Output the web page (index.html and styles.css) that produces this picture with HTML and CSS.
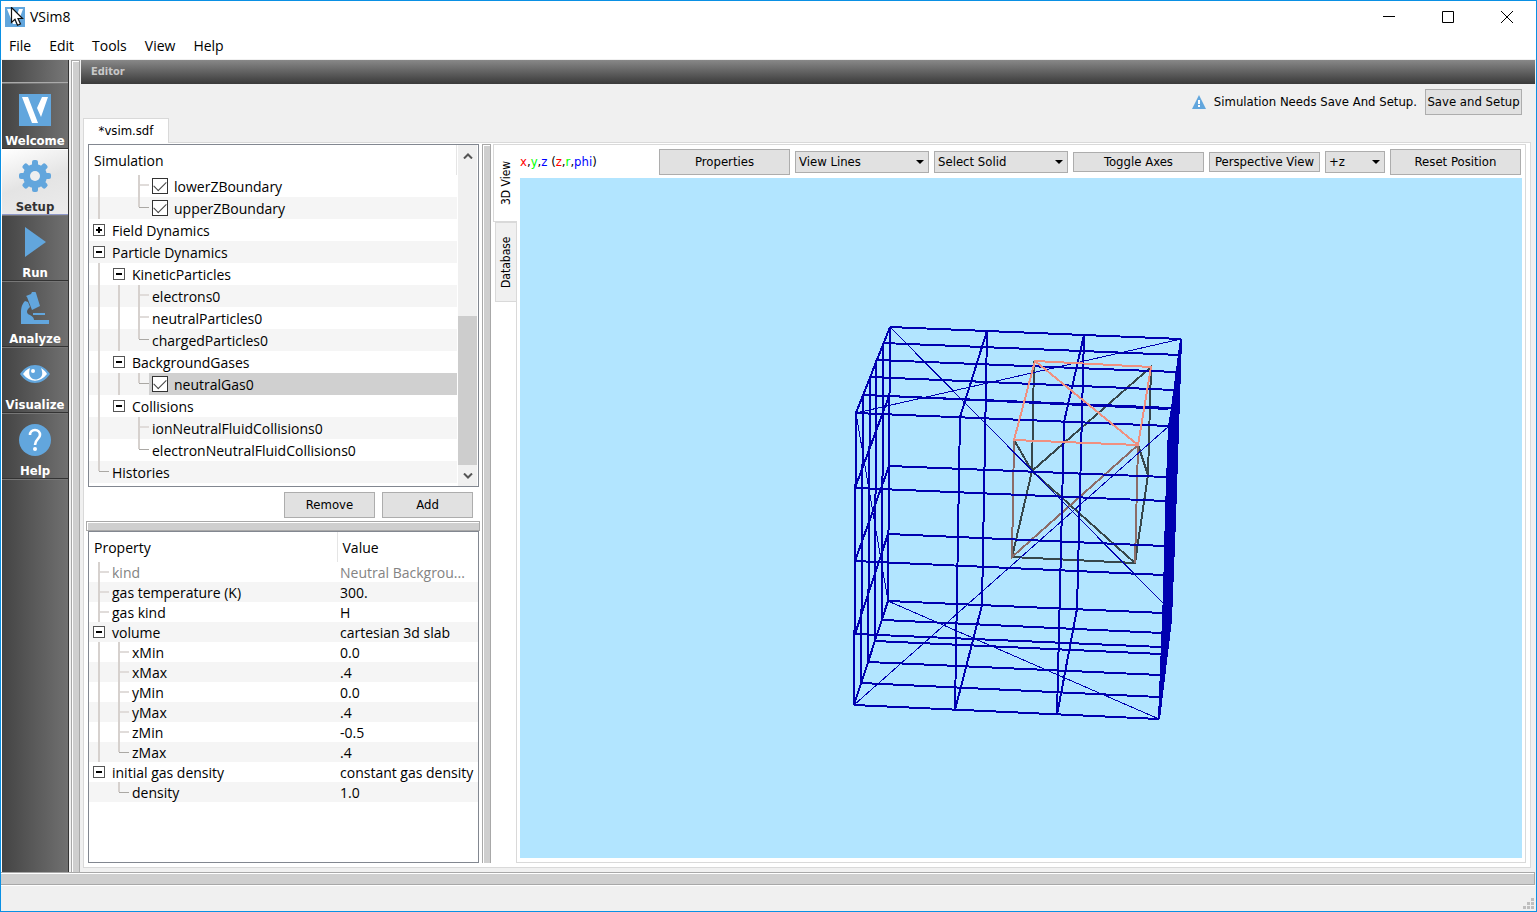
FILE: index.html
```html
<!DOCTYPE html>
<html lang="en">
<head>
<meta charset="utf-8">
<title>VSim8</title>
<link rel="stylesheet" href="styles.css">
</head>
<body>
<div class="window">
  <header class="titlebar">
    <svg class="app-icon" width="20" height="20" viewBox="0 0 20 20" aria-hidden="true">
      <rect width="20" height="20" fill="#62a6dd"/>
      <path d="M2 2h4l5 15H8zM14 2h4l-4 11-2-5z" fill="#fff"/>
      <path d="M6.500 .5v15l3.500-3.200 2.500 6 3-1.300-2.500-5.500h4.500z" fill="#fff" stroke="#111" stroke-width="1.200"/>
    </svg>
    <h1 class="title">VSim8</h1>
    <button class="win-btn" aria-label="Minimize"><svg width="12" height="12" viewBox="0 0 12 12"><path d="M0 5.500h12" stroke="#000" fill="none"/></svg></button>
    <button class="win-btn" aria-label="Maximize"><svg width="12" height="12" viewBox="0 0 12 12"><path d="M.5.5h11v11H.5z" stroke="#000" fill="none"/></svg></button>
    <button class="win-btn" aria-label="Close"><svg width="12" height="12" viewBox="0 0 12 12"><path d="M0 0l12 12M12 0L0 12" stroke="#000" fill="none"/></svg></button>
  </header>
  <nav class="menubar">
    <button>File</button><button>Edit</button><button>Tools</button><button>View</button><button>Help</button>
  </nav>

  <div class="work">
    <nav class="side">
      <div class="side-top"></div>
      <button class="side-item">
        <svg width="32" height="32" viewBox="0 0 32 32"><rect width="32" height="32" fill="#62a6dd"/><path d="M3 3h6l10 26h-6zM23 3h6l-7 20-4-9z" fill="#fff"/></svg>
        Welcome</button>
      <button class="side-item active">
        <svg width="32" height="32" viewBox="0 0 32 32"><g fill="#62a6dd"><rect x="13" width="6" height="32" rx="2"/><rect x="13" width="6" height="32" rx="2" transform="rotate(45 16 16)"/><rect x="13" width="6" height="32" rx="2" transform="rotate(90 16 16)"/><rect x="13" width="6" height="32" rx="2" transform="rotate(135 16 16)"/><circle cx="16" cy="16" r="12"/></g><circle cx="16" cy="16" r="5" fill="#efefef"/></svg>
        Setup</button>
      <button class="side-item">
        <svg width="32" height="32" viewBox="0 0 32 32"><path d="M6 1l21 15L6 31z" fill="#62a6dd"/></svg>
        Run</button>
      <button class="side-item">
        <svg width="32" height="32" viewBox="0 0 32 32"><g fill="#62a6dd"><path d="M7 4l5-2 1-2 3-1 1 2 4 13-8 4-5-13z"/><path d="M6 9l3 1 2 5c-4 3-4 7 0 8 3 2 4 3 4 5h15v4H2V22c0-4 0-9 4-13z"/><path d="M14 21h12v2H14z"/></g></svg>
        Analyze</button>
      <button class="side-item">
        <svg width="32" height="32" viewBox="0 0 32 32"><path d="M1 16C9 4 23 4 31 16 23 28 9 28 1 16z" fill="#62a6dd"/><path d="M4 16C7 12 9 11 11 10c-3 9 3 13 8 11 5-2 5-6 3-11 3 2 5 4 6 6-7 9-17 9-24 0z" fill="#fff"/><circle cx="14" cy="13" r="2" fill="#fff"/></svg>
        Visualize</button>
      <button class="side-item">
        <svg width="32" height="32" viewBox="0 0 32 32"><circle cx="16" cy="16" r="16" fill="#62a6dd"/><path d="M11 11c0-3 2-5 5-5s5 2 5 5c0 4-5 4-5 10" fill="none" stroke="#fff" stroke-width="2.600"/><circle cx="16" cy="25" r="2" fill="#fff"/></svg>
        Help</button>
      <div class="side-fill"></div>
    </nav>
    <div class="split split-v split-main"></div>

    <main class="editor">
      <h2 class="editor-bar">Editor</h2>
      <div class="notice">
        <svg width="14" height="14" viewBox="0 0 14 14"><path d="M7 0l7 14H0z" fill="#62a6dd"/><path d="M6 5h2v4H6zM6 10h2v2H6z" fill="#fff"/></svg>
        <span>Simulation Needs Save And Setup.</span>
        <button class="btn tall save">Save and Setup</button>
      </div>
      <div class="filetabs"><button class="filetab">*vsim.sdf</button></div>
      <section class="pane">
        <div class="left">
          <div class="tree">
            <div class="tree-main">
              <div class="tree-head">Simulation</div>
              <ul class="rows">
                <li><i class="g v"></i><i class="g"></i><i class="g t"></i><label><input type="checkbox" checked><span>lowerZBoundary</span></label></li>
                <li><i class="g v"></i><i class="g"></i><i class="g e"></i><label><input type="checkbox" checked><span>upperZBoundary</span></label></li>
                <li><button class="tog plus" aria-label="Expand"></button><span>Field Dynamics</span></li>
                <li><button class="tog" aria-label="Collapse"></button><span>Particle Dynamics</span></li>
                <li><i class="g v"></i><button class="tog" aria-label="Collapse"></button><span>KineticParticles</span></li>
                <li><i class="g v"></i><i class="g v"></i><i class="g t"></i><span>electrons0</span></li>
                <li><i class="g v"></i><i class="g v"></i><i class="g t"></i><span>neutralParticles0</span></li>
                <li><i class="g v"></i><i class="g v"></i><i class="g e"></i><span>chargedParticles0</span></li>
                <li><i class="g v"></i><button class="tog" aria-label="Collapse"></button><span>BackgroundGases</span></li>
                <li><i class="g v"></i><i class="g v"></i><i class="g e"></i><label class="selected"><input type="checkbox" checked><span>neutralGas0</span></label></li>
                <li><i class="g v"></i><button class="tog" aria-label="Collapse"></button><span>Collisions</span></li>
                <li><i class="g v"></i><i class="g"></i><i class="g t"></i><span>ionNeutralFluidCollisions0</span></li>
                <li><i class="g v"></i><i class="g"></i><i class="g e"></i><span>electronNeutralFluidCollisions0</span></li>
                <li><i class="g e"></i><span>Histories</span></li>
              </ul>
            </div>
            <div class="scroll">
              <button aria-label="Scroll up"><svg width="10" height="6" viewBox="0 0 10 6"><path d="M1 5.500l4-4 4 4" fill="none" stroke="#555" stroke-width="2"/></svg></button>
              <div class="track"><div class="thumb"></div></div>
              <button aria-label="Scroll down"><svg width="10" height="6" viewBox="0 0 10 6"><path d="M1 .5l4 4 4-4" fill="none" stroke="#555" stroke-width="2"/></svg></button>
            </div>
          </div>
          <div class="actions"><button class="btn tall">Remove</button><button class="btn tall">Add</button></div>
          <div class="split split-h"></div>
          <div class="props">
            <table>
              <thead><tr><th scope="col">Property</th><th scope="col">Value</th></tr></thead>
              <tbody>
                <tr class="off"><td><div><i class="g t"></i><span>kind</span></div></td><td>Neutral Backgrou...</td></tr>
                <tr><td><div><i class="g t"></i><span>gas temperature (K)</span></div></td><td>300.</td></tr>
                <tr><td><div><i class="g t"></i><span>gas kind</span></div></td><td>H</td></tr>
                <tr><td><div><button class="tog" aria-label="Collapse"></button><span>volume</span></div></td><td>cartesian 3d slab</td></tr>
                <tr><td><div><i class="g v"></i><i class="g t"></i><span>xMin</span></div></td><td>0.0</td></tr>
                <tr><td><div><i class="g v"></i><i class="g t"></i><span>xMax</span></div></td><td>.4</td></tr>
                <tr><td><div><i class="g v"></i><i class="g t"></i><span>yMin</span></div></td><td>0.0</td></tr>
                <tr><td><div><i class="g v"></i><i class="g t"></i><span>yMax</span></div></td><td>.4</td></tr>
                <tr><td><div><i class="g v"></i><i class="g t"></i><span>zMin</span></div></td><td>-0.5</td></tr>
                <tr><td><div><i class="g v"></i><i class="g e"></i><span>zMax</span></div></td><td>.4</td></tr>
                <tr><td><div><button class="tog" aria-label="Collapse"></button><span>initial gas density</span></div></td><td>constant gas density</td></tr>
                <tr><td><div><i class="g"></i><i class="g e"></i><span>density</span></div></td><td>1.0</td></tr>
              </tbody>
            </table>
          </div>
        </div>
        <div class="split split-v"></div>
        <div class="vtabs">
          <button class="vtab current"><span>3D View</span></button>
          <button class="vtab"><span>Database</span></button>
          <div class="vrest"></div>
        </div>
        <div class="view">
          <div class="toolbar">
            <span class="axes"><b class="r">x</b>,<b class="gr">y</b>,<b class="bl">z</b> (<b class="r">z</b>,<b class="gr">r</b>,<b class="bl">phi</b>)</span>
            <button class="btn tall w-l">Properties</button>
            <div class="combo w-c"><select aria-label="View mode"><option>View Lines</option></select></div>
            <div class="combo w-c"><select aria-label="Solid"><option>Select Solid</option></select></div>
            <button class="btn w-l">Toggle Axes</button>
            <button class="btn w-m">Perspective View</button>
            <div class="combo w-s"><select aria-label="View direction"><option>+z</option></select></div>
            <button class="btn tall w-l">Reset Position</button>
          </div>
          <div class="canvas">
            <svg viewBox="520 178 1002 680" preserveAspectRatio="xMidYMid meet" role="img" aria-label="Wireframe of the simulation grid">
              <g fill="none" shape-rendering="crispEdges">
                <path stroke="#37474b" stroke-width="2" d="M1034 361L1032 471L1012 557L1135 563L1148 475L1151 367L1032 471L1135 563M1014 440L1032 471M1138 445L1148 475"/>
                <path stroke="#8c6c68" stroke-width="2" d="M1014 440L1012 557L1138 445L1135 563"/>
                <path stroke="#0000b0" stroke-width="2" d="M890 327L1181 339M883 343L1180 355M877 360L1176 372M870 377L1174 390M863 395L1171 408M856 413L1169 426M889 396L1168 409M889 466L1166 477M856 488L1166 501M888 534L1164 546M855 561L1164 575M888 601L1163 613M883 620L1162 633M855 634L1161 647M875 641L1161 654M868 662L1160 675M861 683L1159 697M854 705L1159 719"/>
                <path stroke="#0000b0" stroke-width="2" d="M890 327L856 413M890 327L888 601M883 343L882 620M876 360L875 641M870 377L868 662M863 395L861 683M856 413L854 705L888 601M855 488L889 396M855 561L889 466M855 634L888 534M987 331L982 605L955 710L960 417ZM1084 335L1077 609L1057 715L1064 422Z"/>
                <path stroke="#0000b0" d="M1181 339L856 413L888 601L1159 719M890 327L1163 603M854 705L1169 426"/>
                <path stroke="#f09080" stroke-width="2" d="M1035 361L1151 367L1138 445L1014 440ZL1138 445"/>
              </g>
              <path fill="#0000b0" shape-rendering="crispEdges" d="M1180 339h2l-6 181-4 100-12 99h-2l5-126 2-83 3-84 3-18z"/>
            </svg>
          </div>
        </div>
      </section>
    </main>
  </div>
  <div class="split split-foot"></div>
  <footer class="status">
    <svg width="11" height="11" viewBox="0 0 11 11" fill="#bfbfbf" aria-hidden="true"><path d="M8 0h3v3H8zM4 4h3v3H4zM8 4h3v3H8zM0 8h3v3H0zM4 8h3v3H4zM8 8h3v3H8z"/></svg>
  </footer>
</div>
</body>
</html>
```
FILE: styles.css
```css
* { box-sizing: border-box; }
body { margin: 0; }
button, select, input { font: inherit; color: inherit; margin: 0; padding: 0; border: 0; background: none; border-radius: 0; }
svg { display: block; flex: none; }

.window {
  display: flex; flex-direction: column; height: 100vh; min-height: 900px;
  border: 1px solid #0a90e4; background: #f0f0f0; color: #000;
  font: 14px/20px "Open Sans", "Noto Sans", sans-serif;
}
.titlebar { display: flex; align-items: center; height: 32px; flex: none; padding-left: 4px; background: #fff; }
.title { flex: 1; margin: 0; padding-left: 5px; font-size: 14px; font-weight: 400; }
.win-btn { display: flex; justify-content: center; align-items: center; width: 59px; height: 32px; }
.menubar { display: flex; gap: 18px; height: 26px; flex: none; padding: 0 8px; background: #fff; align-items: center; }

.work { display: flex; flex: 1; min-height: 0; padding-top: 1px; }

.side, .btn, .combo, .vtab, .filetab, .notice, .axes, .editor-bar {
  font-family: "DejaVu Sans Condensed", "Noto Sans", sans-serif;
  font-size: 13px; line-height: 16px;
}
.side { display: flex; flex-direction: column; width: 68px; flex: none; border-right: 1px solid #333; padding-left: 1px; background: #fff; }
.side-top { height: 23px; background: linear-gradient(90deg, #444, #777); border-bottom: 1px solid #aaa; }
.side-item {
  display: flex; flex-direction: column; align-items: center; gap: 7px; height: 66px; padding-top: 10px;
  background: linear-gradient(90deg, #444, #707070); border-top: 1px solid #777; border-bottom: 1px solid #333;
  color: #fff; font-weight: 700;
}
.side-item.active { background: linear-gradient(160deg, #fff, #e4e4e4 50%, #ececec); border-color: #fff #fff #8f98c8; color: #333; }
.side-fill { flex: 1; background: linear-gradient(90deg, #444, #707070); border-top: 1px solid #777; }

.split { flex: none; background: #cfcfcf; }
.split-v { width: 9px; border-left: 1px solid #a8a8a8; border-top: 1px solid #a8a8a8; border-right: 1px solid #a8a8a8; box-shadow: inset 1px 1px #fff; }
.split-main { margin: 0 1px 0 2px; }
.split-h { height: 10px; margin: 3px -1px 0 -2px; border: 1px solid #a8a8a8; box-shadow: inset 1px 1px #fff; }
.split-foot { height: 13px; margin-right: 1px; border: solid #a8a8a8; border-width: 1px 1px 1px 0; box-shadow: inset 0 1px #fff, 0 1px #fff; }

.editor { flex: 1; min-width: 0; display: flex; flex-direction: column; padding-right: 1px; }
.editor-bar { margin: 0; height: 24px; flex: none; padding: 4px 10px; background: linear-gradient(#888, #3a3a3a); color: #c8c8c8; font-weight: 700; font-size: 11px; }
.notice { display: flex; align-items: center; justify-content: flex-end; gap: 8px; padding: 5px 13px 0 0; }
.btn { height: 20px; border: 1px solid #adadad; background: #e1e1e1; white-space: nowrap; flex: none; }
.btn.tall { height: 26px; }
.save { width: 97px; }
.filetabs { padding: 3px 0 0 2px; height: 27px; flex: none; }
.filetab { width: 86px; height: 25px; position: relative; background: #fff; border: 1px solid #d9d9d9; border-bottom: 0; }

.pane { flex: 1; min-height: 0; display: flex; margin: 0 4px 4px 2px; padding: 1px 4px 4px; border: 1px solid #d9d9d9; background: #fff; }
.left { display: flex; flex-direction: column; width: 391px; flex: none; margin-right: 3px; }
.tree { display: flex; border: 1px solid #828790; }
.tree-main { flex: 1; padding-bottom: 3px; }
.tree-head { height: 30px; padding: 6px 5px 4px; border-right: 1px solid #e5e5e5; }
.rows { list-style: none; margin: 0; padding: 0; }
.rows li { display: flex; height: 22px; line-height: 22px; }
.rows li:nth-child(even) { background: #f5f5f5; }
.rows span, .props td span { padding: 1px 0 0 3px; }
.rows label { display: flex; align-items: center; gap: 3px; flex: 1; padding-left: 3px; }
.rows label span { padding-top: 2px; }
.selected { background: #d0d0d0; }
input[type=checkbox] {
  appearance: none; width: 16px; height: 16px; border: 1px solid #333; background: #fff;
  display: grid; place-items: center;
}
input[type=checkbox]:checked::before { content: ""; width: 11px; height: 6px; border: solid #444; border-width: 0 0 1px 1px; transform: translateY(-2px) rotate(-45deg); }

.g { width: 20px; flex: none; background-repeat: no-repeat; }
.v { background-image: linear-gradient(#d6d1ce, #d6d1ce); background-size: 2px 100%; background-position: 9px 0; }
.t { background-image: linear-gradient(#d6d1ce, #d6d1ce), linear-gradient(#e0dcda, #e0dcda); background-size: 2px 100%, 9px 2px; background-position: 9px 0, 11px 9px; }
.e { background-image: linear-gradient(#d6d1ce, #d6d1ce), linear-gradient(#aaa8a4, #aaa8a4); background-size: 2px 10px, 10px 1px; background-position: 9px 0, 10px 10px; }
.tog {
  width: 12px; height: 12px; margin: 0 4px; align-self: center; flex: none; border: 1px solid #555;
  background: linear-gradient(#000, #000) 2px 4px / 6px 2px no-repeat #fff;
}
.tog.plus { background: linear-gradient(#000, #000) 2px 4px / 6px 2px no-repeat, linear-gradient(#000, #000) 4px 2px / 2px 6px no-repeat #fff; }

.scroll { width: 21px; display: flex; flex-direction: column; background: #f0f0f0; border: solid #fff; border-width: 0 1px; }
.scroll button { height: 21px; display: flex; align-items: center; justify-content: center; }
.track { flex: 1; display: flex; flex-direction: column; justify-content: flex-end; }
.thumb { height: 50%; background: #cdcdcd; }

.actions { display: flex; justify-content: flex-end; gap: 7px; padding: 5px 6px 0 0; }
.actions .btn { width: 91px; }

.props { flex: 1; min-height: 0; border: 1px solid #828790; }
table { width: 100%; border-collapse: collapse; table-layout: fixed; }
th { height: 30px; padding: 2px 5px 0; font-weight: 400; text-align: left; }
th:first-child { width: 248px; border-right: 1px solid #e5e5e5; }
td { height: 20px; padding: 0; white-space: nowrap; }
td:last-child { padding: 2px 0 0 3px; line-height: 18px; }
td div { display: flex; height: 20px; }
tbody tr:nth-child(even) { background: #f5f5f5; }
.off { color: #838383; }

.vtabs { display: flex; flex-direction: column; width: 24px; flex: none; margin-left: 2px; }
.vtab { writing-mode: vertical-rl; border: 1px solid #d9d9d9; font-size: 12px; }
.vtab span { display: block; transform: rotate(180deg); }
.vtab.current { height: 78px; border-right: 0; }
.vtab:not(.current) { height: 80px; margin-left: 2px; background: #f0f0f0; }
.vrest { flex: 1; border-right: 1px solid #d9d9d9; }
.view { flex: 1; min-width: 0; display: flex; flex-direction: column; padding: 0 3px 4px 3px; border: solid #d9d9d9; border-width: 1px 1px 1px 0; }
.toolbar { display: flex; align-items: center; gap: 5px; height: 33px; flex: none; padding-right: 1px; }
.axes { flex: 1; }
.axes b { font-weight: 400; }
.r { color: #f00; } .gr { color: #0f0; } .bl { color: #00f; }
.w-l { width: 131px; } .w-c { width: 134px; } .w-m { width: 111px; } .w-s { width: 60px; }
.combo { position: relative; flex: none; }
.combo select { display: block; appearance: none; width: 100%; height: 22px; padding-left: 3px; border: 1px solid #adadad; background: #e1e1e1; }
.combo::after { content: ""; position: absolute; right: 5px; top: 9px; border: 4px solid transparent; border-top-color: #000; border-bottom: 0; pointer-events: none; }
.canvas { flex: 1; min-height: 0; background: #b2e5ff; }
.canvas svg { width: 100%; height: 100%; }

.status { display: flex; justify-content: flex-end; align-items: flex-end; height: 26px; flex: none; padding: 2px; }
```
